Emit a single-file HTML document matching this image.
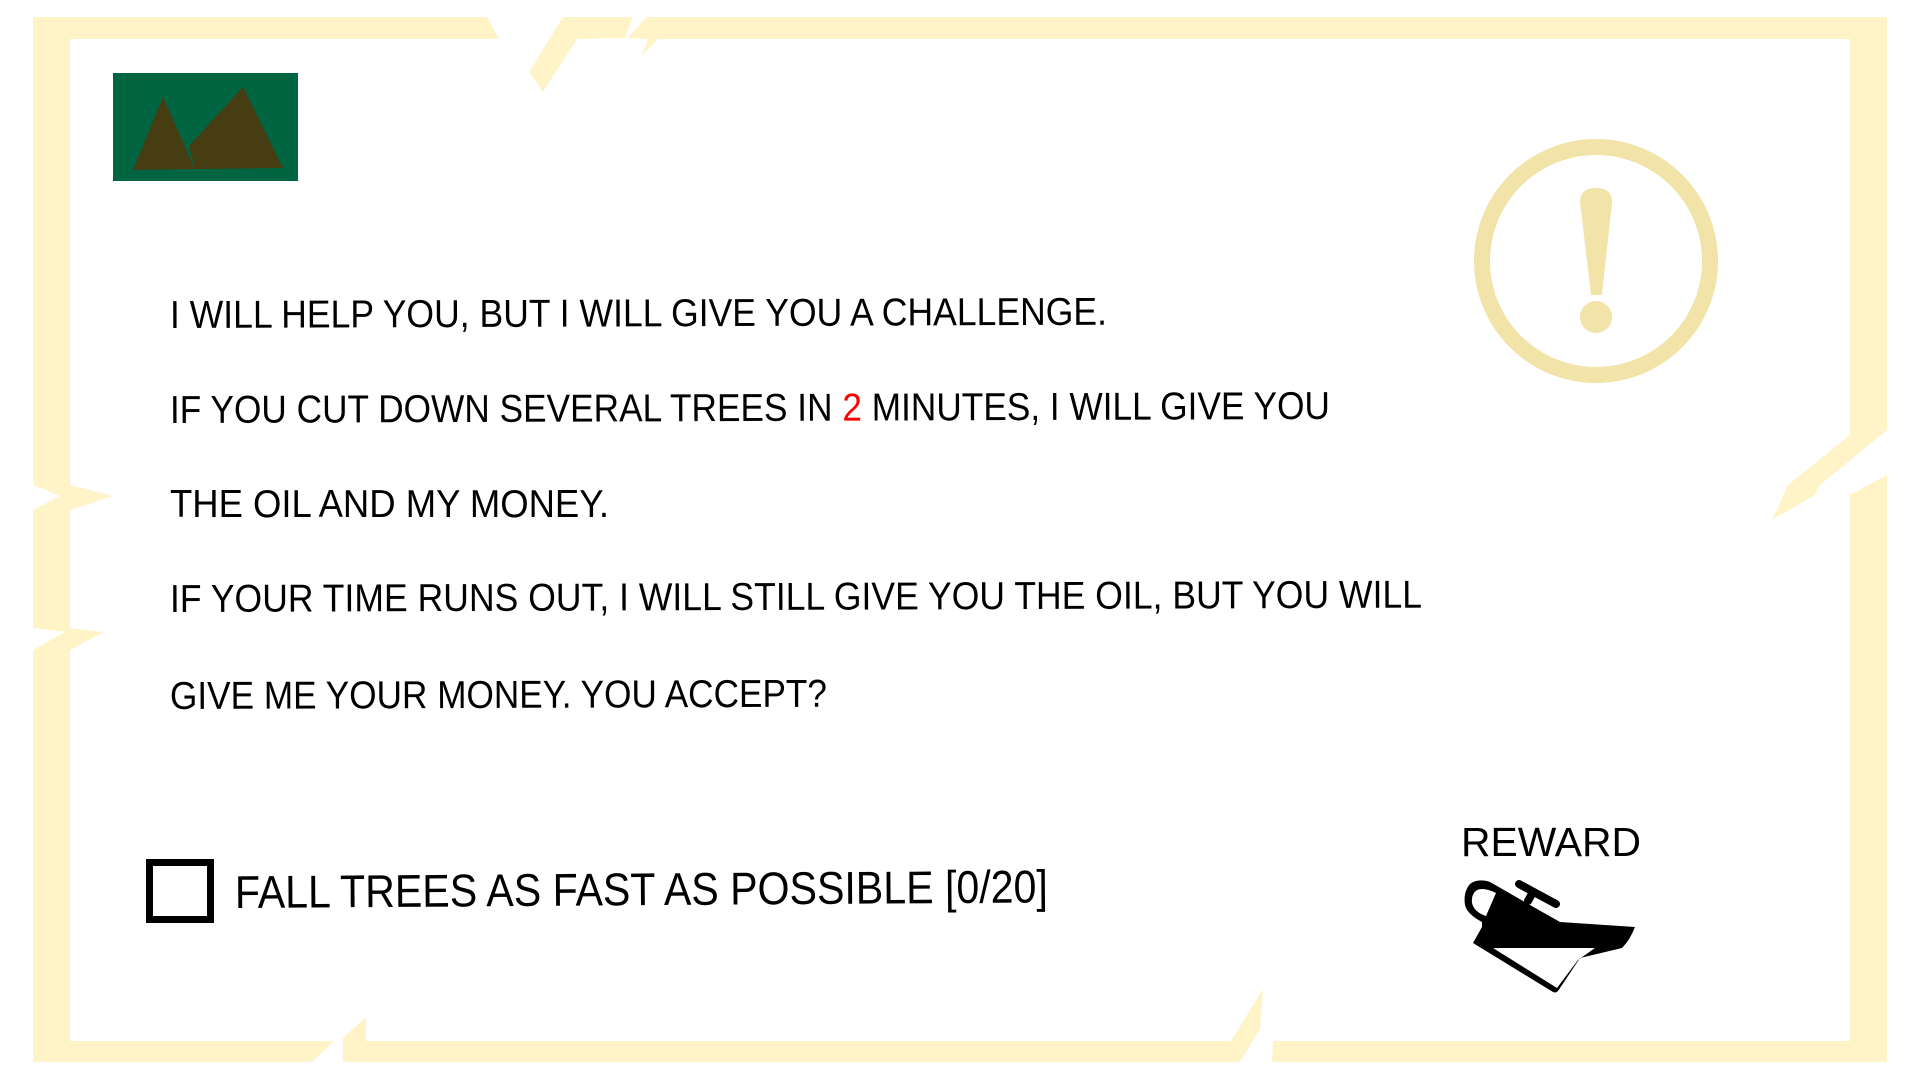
<!DOCTYPE html>
<html><head><meta charset="utf-8"><style>
html,body{margin:0;padding:0;background:#fff;width:1920px;height:1080px;overflow:hidden}
svg{display:block}
text{font-family:"Liberation Sans",sans-serif;fill:#000}
</style></head><body>
<svg width="1920" height="1080" viewBox="0 0 1920 1080" xmlns="http://www.w3.org/2000/svg">
<g fill="#FFF4C8">
 <polygon points="33,17 487,17 499,39 70,39"/>
 <polygon points="563,17 633,17 625,38 577,39 543,92 529,72"/>
 <polygon points="647,17 1887,17 1887,430 1850,435 1850,39 658,39 642,55 648,39 627,38"/>
 <polygon points="1887,430 1820,485 1815,495 1772,520 1788,485 1850,435"/>
 <polygon points="1850,495 1887,475 1887,1062 1272,1062 1273,1041 1850,1041"/>
 <polygon points="1231,1041 1263,989 1260,1029 1240,1062 343,1062 343,1038 366,1017 366,1041"/>
 <polygon points="33,1062 312,1062 334,1041 70,1041"/>
 <polygon points="33,17 70,17 70,485 113,496 70,510 70,628 104,632 70,650 70,1062 33,1062 33,650 65,632 33,628 33,510 60,496 33,485"/>
</g>
<rect x="113" y="73" width="185" height="108" fill="#006540"/>
<polygon points="133,170 163,97 195,169" fill="#463D12"/>
<polygon points="189,146 243,87 283,168 195,169" fill="#463D12"/>
<ellipse cx="1596" cy="261" rx="114" ry="114" fill="none" stroke="#F2E3A8" stroke-width="16"/>
<path d="M1580,202 Q1580,188 1596,188 Q1612,188 1612,202 L1602,295 L1591,295 Z" fill="#F2E3A8"/>
<ellipse cx="1596" cy="317" rx="16" ry="16" fill="#F2E3A8"/>
<g font-size="39">
<text x="170" y="328" textLength="937" lengthAdjust="spacingAndGlyphs" transform="rotate(-0.2 170 328)">I WILL HELP YOU, BUT I WILL GIVE YOU A CHALLENGE.</text>
<text x="170" y="423" textLength="1160" lengthAdjust="spacingAndGlyphs" transform="rotate(-0.2 170 423)">IF YOU CUT DOWN SEVERAL TREES IN <tspan fill="#ff0000">2</tspan> MINUTES, I WILL GIVE YOU</text>
<text x="170" y="517" textLength="439" lengthAdjust="spacingAndGlyphs">THE OIL AND MY MONEY.</text>
<text x="170" y="612" textLength="1252" lengthAdjust="spacingAndGlyphs" transform="rotate(-0.2 170 612)">IF YOUR TIME RUNS OUT, I WILL STILL GIVE YOU THE OIL, BUT YOU WILL</text>
<text x="170" y="709" textLength="657" lengthAdjust="spacingAndGlyphs" transform="rotate(-0.2 170 709)">GIVE ME YOUR MONEY. YOU ACCEPT?</text>
</g>
<rect x="149.5" y="862.5" width="61" height="57" fill="none" stroke="#000" stroke-width="7"/>
<text x="235" y="908" font-size="46" textLength="813" lengthAdjust="spacingAndGlyphs" transform="rotate(-0.4 235 908)">FALL TREES AS FAST AS POSSIBLE [0/20]</text>
<text x="1461" y="856" font-size="41" textLength="180" lengthAdjust="spacingAndGlyphs">REWARD</text>
<path fill="#000" fill-rule="evenodd" d="M1490,882 Q1478,878 1470,884 Q1463,892 1465,905 Q1467,914 1482,922 L1482,927 L1473,943 L1553,992 Q1557,994 1560,988 L1580,958 L1622,948 Q1630,940 1635,927 L1560,922 L1530,905 L1497,886 Z M1477,890 Q1484,887 1496,893 L1486,916 Q1474,912 1472,903 Q1471,894 1477,890 Z M1493,948 L1595,948 L1578,960 L1557,988 Z"/>
<path d="M1519,884 L1556,904 M1533,892 L1528,901" stroke="#000" stroke-width="8" stroke-linecap="round" fill="none"/>
</svg>
</body></html>
